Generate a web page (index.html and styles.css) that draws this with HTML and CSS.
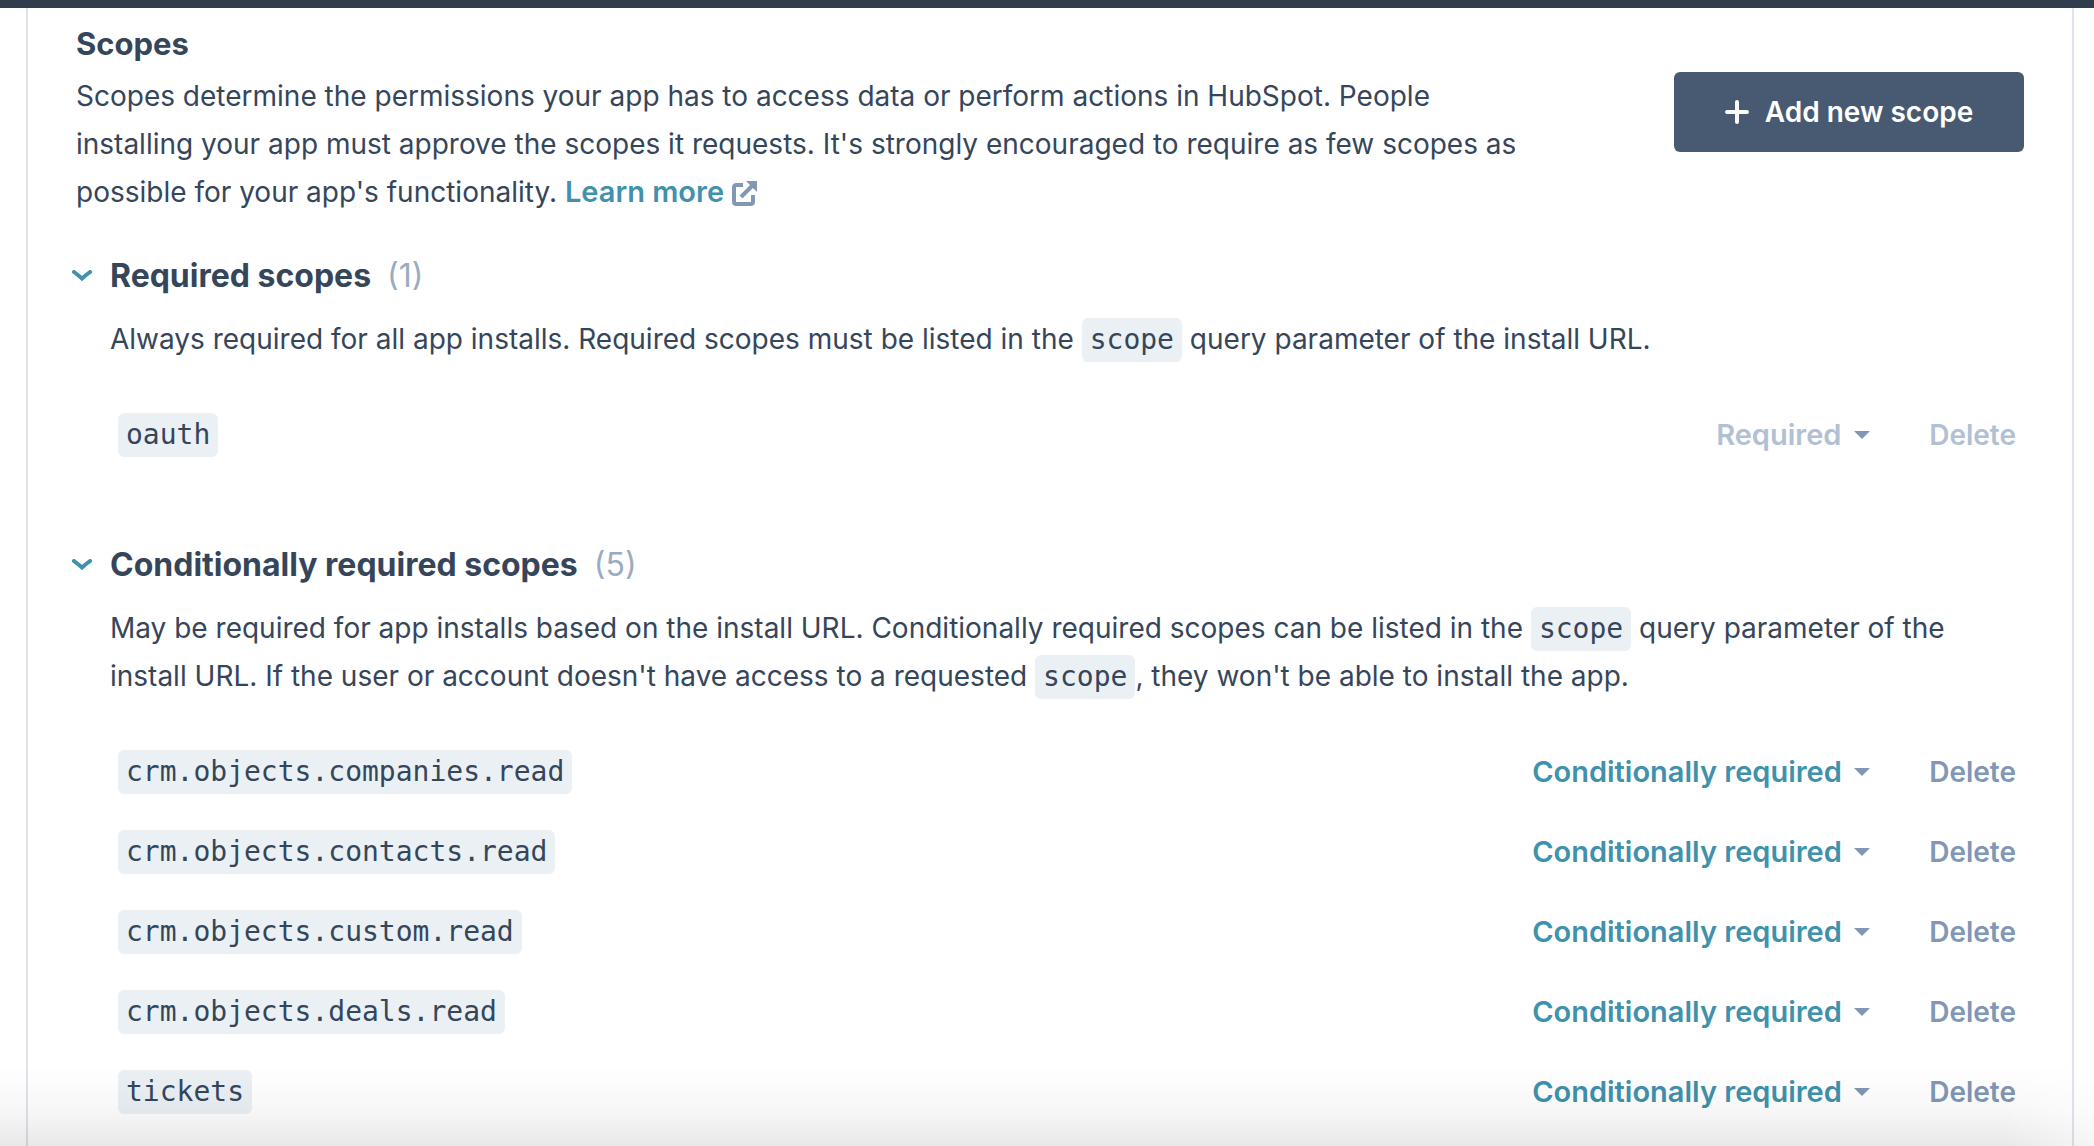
FILE: index.html
```html
<!DOCTYPE html>
<html lang="en">
<head>
<meta charset="utf-8">
<meta name="viewport" content="width=device-width, initial-scale=1">
<title>Scopes</title>
<link rel="stylesheet" href="styles.css">
</head>
<body>
<header class="topbar"></header>
<main class="panel">
  <section class="intro">
    <div class="intro-text">
      <h2 class="intro-title">Scopes</h2>
      <p class="copy">Scopes determine the permissions your app has to access data or perform actions in HubSpot. People installing your app must approve the scopes it requests. It's strongly encouraged to require as few scopes as possible for your app's functionality. <a class="link" href="#learn-more">Learn more<svg class="external" viewBox="0 0 26 26" aria-hidden="true"><path d="M11 5H4.500Q2 5 2 7.500V21.500Q2 24 4.500 24H18.500Q21 24 21 21.500V15"/><path d="M9 17L22 4"/><path class="tip" d="M14 1H25V12L21.500 8.500 17.500 4.500Z"/></svg></a></p>
    </div>
    <button class="add" type="button"><svg class="plus" viewBox="0 0 24 24" aria-hidden="true"><path d="M12 2V22M2 12H22"/></svg>Add new scope</button>
  </section>

  <section class="group">
    <h3 class="group-title"><button class="toggle" type="button" aria-expanded="true"><svg class="chevron" viewBox="0 0 20 12" aria-hidden="true"><path d="M2 2Q6 5 10 8.500Q14 5 18 2"/></svg>Required scopes<span class="count">(1)</span></button></h3>
    <div class="group-body">
      <p class="copy">Always required for all app installs. Required scopes must be listed in the <code class="code">scope</code> query parameter of the install URL.</p>
      <ul class="rows">
        <li class="row"><code class="code">oauth</code><span class="pick"><select class="select" aria-label="Requirement for oauth" disabled><option>Required</option></select><svg class="caret" viewBox="0 0 16 8" aria-hidden="true"><path d="M0 0H16L8 8Z"/></svg></span><button class="delete" type="button" disabled>Delete</button></li>
      </ul>
    </div>
  </section>

  <section class="group">
    <h3 class="group-title"><button class="toggle" type="button" aria-expanded="true"><svg class="chevron" viewBox="0 0 20 12" aria-hidden="true"><path d="M2 2Q6 5 10 8.500Q14 5 18 2"/></svg>Conditionally required scopes<span class="count">(5)</span></button></h3>
    <div class="group-body">
      <p class="copy">May be required for app installs based on the install URL. Conditionally required scopes can be listed in the <code class="code">scope</code> query parameter of the install URL. If the user or account doesn't have access to a requested <code class="code">scope</code>, they won't be able to install the app.</p>
      <ul class="rows">
        <li class="row"><code class="code">crm.objects.companies.read</code><span class="pick"><select class="select" aria-label="Requirement for crm.objects.companies.read"><option>Conditionally required</option></select><svg class="caret" viewBox="0 0 16 8" aria-hidden="true"><path d="M0 0H16L8 8Z"/></svg></span><button class="delete" type="button">Delete</button></li>
        <li class="row"><code class="code">crm.objects.contacts.read</code><span class="pick"><select class="select" aria-label="Requirement for crm.objects.contacts.read"><option>Conditionally required</option></select><svg class="caret" viewBox="0 0 16 8" aria-hidden="true"><path d="M0 0H16L8 8Z"/></svg></span><button class="delete" type="button">Delete</button></li>
        <li class="row"><code class="code">crm.objects.custom.read</code><span class="pick"><select class="select" aria-label="Requirement for crm.objects.custom.read"><option>Conditionally required</option></select><svg class="caret" viewBox="0 0 16 8" aria-hidden="true"><path d="M0 0H16L8 8Z"/></svg></span><button class="delete" type="button">Delete</button></li>
        <li class="row"><code class="code">crm.objects.deals.read</code><span class="pick"><select class="select" aria-label="Requirement for crm.objects.deals.read"><option>Conditionally required</option></select><svg class="caret" viewBox="0 0 16 8" aria-hidden="true"><path d="M0 0H16L8 8Z"/></svg></span><button class="delete" type="button">Delete</button></li>
        <li class="row"><code class="code">tickets</code><span class="pick"><select class="select" aria-label="Requirement for tickets"><option>Conditionally required</option></select><svg class="caret" viewBox="0 0 16 8" aria-hidden="true"><path d="M0 0H16L8 8Z"/></svg></span><button class="delete" type="button">Delete</button></li>
      </ul>
    </div>
  </section>
</main>
<div class="shade"></div>
</body>
</html>
```
FILE: styles.css
```css
* { box-sizing: border-box; }

body {
  display: flex;
  flex-direction: column;
  min-height: 100vh;
  margin: 0;
  background: #fff;
  color: #35465b;
  font: 400 28px/48px Inter, "Liberation Sans", sans-serif;
}

h2, h3, p, ul { margin: 0; padding: 0; }

button, select {
  margin: 0;
  padding: 0;
  border: 0;
  background: none;
  color: inherit;
  font: inherit;
  cursor: pointer;
}

.topbar {
  height: 8px;
  background: #303d4d;
}

.panel {
  flex: 1;
  margin: 0 20px 0 26px;
  padding: 12px 48px 20px;
  border: solid #dfe3eb;
  border-width: 0 2px;
}

.intro {
  display: flex;
  justify-content: space-between;
  align-items: flex-start;
}

.intro-text { width: 75%; }

.intro-title {
  padding-bottom: 4px;
  font-size: 31px;
  font-weight: 700;
  line-height: 48px;
}

.link {
  color: #3f91ac;
  font-size: 29px;
  font-weight: 600;
  text-decoration: none;
}

.external {
  width: 26px;
  height: 26px;
  margin-left: 8px;
  vertical-align: -4px;
  fill: none;
  stroke: #8097b5;
  stroke-width: 4;
}

.external .tip {
  fill: #8097b5;
  stroke: none;
}

.add {
  display: flex;
  align-items: center;
  justify-content: center;
  gap: 16px;
  width: 350px;
  height: 80px;
  margin-top: 52px;
  border-radius: 6px;
  background: #475a72;
  color: #fff;
  font-weight: 600;
}

.plus {
  width: 24px;
  height: 24px;
  fill: none;
  stroke: #fff;
  stroke-width: 4;
  stroke-linecap: round;
}

.group { padding-top: 32px; }
.group + .group { padding-top: 62px; }

.group-title {
  margin-left: -4px;
  font-size: 32px;
  line-height: 56px;
}

.toggle {
  display: flex;
  align-items: center;
  font-weight: 700;
}

.chevron {
  width: 20px;
  height: 12px;
  margin-right: 18px;
  fill: none;
  stroke: #3f91ac;
  stroke-width: 4;
  stroke-linecap: round;
}

.count {
  margin-left: 16px;
  color: #99acc2;
  font-weight: 400;
}

.group-body {
  padding: 11px 0 0 34px;
}

.code {
  display: inline-block;
  padding: 0 8px;
  border-radius: 6px;
  background: #eaf0f4;
  font: 400 28px/44px "DejaVu Sans Mono", "Liberation Mono", monospace;
}

.copy .code { margin: -8px 0; }

.rows {
  padding: 32px 8px 0;
  list-style: none;
}

.row {
  display: flex;
  align-items: center;
  height: 80px;
}

.pick {
  display: grid;
  align-items: center;
  margin-left: auto;
}

.select, .caret { grid-area: 1 / 1; }

.select {
  padding-right: 28px;
  appearance: none;
  color: #3f91ac;
  font-size: 29px;
  font-weight: 600;
}

.caret {
  justify-self: end;
  width: 16px;
  height: 8px;
  fill: #8097b5;
  pointer-events: none;
}

.delete {
  margin-left: 59px;
  color: #8097b5;
  font-weight: 600;
}

.select:disabled, .delete:disabled {
  color: #b2c0d4;
  opacity: 1;
  cursor: default;
}

/* Soft shadow cast upward from the lower edge, fading out by the right side */
.shade {
  position: fixed;
  inset: auto 0 0;
  height: 80px;
  background: linear-gradient(rgba(0, 0, 0, 0), rgba(0, 0, 0, .03) 55%, rgba(0, 0, 0, .09));
  mask-image: linear-gradient(to left, rgba(0, 0, 0, .4), #000 90px);
  pointer-events: none;
}
```
